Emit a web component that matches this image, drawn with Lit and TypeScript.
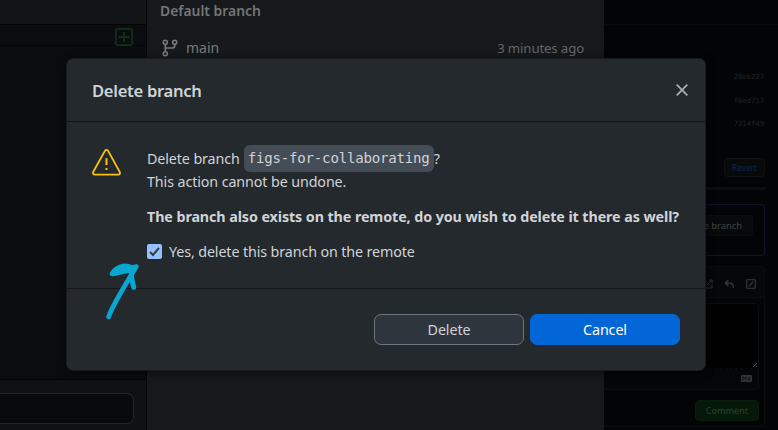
import { LitElement, html, css } from "lit";
import { customElement } from "lit/decorators.js";

const COMMITS = ["28eb227", "f6ed717", "7314f49"];

@customElement("branch-sidebar")
class BranchSidebar extends LitElement {
  static styles = css`
    :host { display: flex; flex-direction: column; box-sizing: border-box; width: 147px; height: 430px; background: #0b0c0f; border-right: 1px solid #040506; }
    .top { height: 24px; background: #111518; border-bottom: 1px solid #030405; }
    .tools { display: flex; justify-content: flex-end; align-items: center; padding: 0 13px 0 0; height: 20px; border-bottom: 1px solid #040506; }
    svg { display: block; margin-top: 3px; overflow: visible; }
    .list { flex: 1; }
    .foot { height: 51px; box-sizing: border-box; background: #0f1113; border-top: 1px solid #030405; padding: 13px 12px 0 0; }
    .input { height: 29px; border: 1px solid #242628; border-left: 0; border-radius: 0 7px 7px 0; background: #090a0c; }
  `;
  render() {
    return html`
      <div class="top"></div>
      <div class="tools">
        <svg width="18" height="18" viewBox="0 0 18 18" fill="none" stroke="#0d3418" stroke-width="1.6">
          <rect x="0.9" y="0.9" width="16.2" height="16.2" rx="1.3" />
          <path d="M9 4v10M4 9h10" stroke-width="1.8" />
        </svg>
      </div>
      <div class="list"></div>
      <div class="foot"><div class="input"></div></div>
    `;
  }
}

@customElement("branch-list")
class BranchList extends LitElement {
  static styles = css`
    :host { display: block; box-sizing: border-box; width: 457px; height: 430px; background: #16191c; padding: 0 20px 0 13px; color: #77797b; font: 14px/20px "Noto Sans", sans-serif; }
    .title { font-weight: 600; font-size: 13.9px; height: 20px; line-height: 21px; color: #747678; }
    .row { display: flex; align-items: center; margin-top: 18px; height: 20px; }
    .name { margin-left: 8px; flex: 1; font-size: 14px; }
    .time { font-size: 13.2px; letter-spacing: -0.12px; color: #626567; }
    svg { display: block; margin-left: 2px; }
  `;
  render() {
    return html`
      <div class="title">Default branch</div>
      <div class="row">
        <svg width="16" height="18" viewBox="0 0 16 18" fill="none" stroke="#77797b" stroke-width="1.6">
          <circle cx="3.3" cy="3.2" r="2" /><circle cx="3.3" cy="14.8" r="2" /><circle cx="12.7" cy="3.2" r="2" />
          <path d="M3.3 5.2v7.6M12.7 5.2v1.6a2.2 2.2 0 0 1-2.2 2.2h-7.2" />
        </svg>
        <span class="name">main</span>
        <span class="time">3 minutes ago</span>
      </div>
    `;
  }
}

@customElement("conversation-pane")
class ConversationPane extends LitElement {
  static styles = css`
    :host { display: flex; flex-direction: column; box-sizing: border-box; width: 174px; height: 430px; background: #030406; padding-right: 13px; overflow: hidden; font: 9px/12px "Noto Sans", sans-serif; color: #2c2e30; }
    .bar { height: 24px; margin-right: -13px; border-bottom: 1px solid #090a0b; }
    .commits { margin-top: 40px; text-align: right; font: 7.2px/23.6px "DejaVu Sans Mono", monospace; color: #232527; height: 70px; padding-right: 1px; }
    .commit { height: 23.6px; }
    .revert { align-self: flex-end; margin-top: 23px; box-sizing: border-box; width: 41px; height: 19px; border: 1px solid #101214; border-radius: 4px; background: #08090b; color: #0d2954; text-align: center; line-height: 17px; font-size: 8.3px; }
    .rule { height: 3px; margin-top: 10px; background: #0c0d0f; }
    .merged { box-sizing: border-box; height: 52px; margin-top: 14px; border: 1px solid #170f2d; border-left: 0; border-radius: 0 4px 4px 0; padding: 10px 11px 0 0; display: flex; justify-content: flex-end; align-items: flex-start; }
    .remove { height: 21px; box-sizing: border-box; padding: 0 10px; border-radius: 3px; background: #08090b; border: 1px solid #0c0d0f; line-height: 19px; font-size: 9.2px; font-weight: 500; color: #3c3e40; white-space: nowrap; }
    .box { box-sizing: border-box; height: 161px; margin-top: 10px; border: 1px solid #0c0d0f; border-left: 0; border-radius: 0 4px 4px 0; display: flex; flex-direction: column; }
    .icons { height: 30px; background: #06070a; border-bottom: 1px solid #0c0d0f; display: flex; justify-content: flex-end; align-items: center; padding-right: 8px; gap: 11px; }
    .icons svg { margin-top: 4px; }
    .editor { box-sizing: border-box; margin: 5px 5px 0 0; height: 87px; border: 1px solid #0c0d0f; border-left: 0; border-radius: 0 4px 4px 0; background: #050609; }
    .area { height: 65px; background: #000; display: flex; justify-content: flex-end; align-items: flex-end; border-radius: 0 3px 0 0; border-bottom: 1px dashed #0a0b0c; box-sizing: border-box; }
    .md { display: flex; justify-content: flex-end; padding: 6px 6px 0 0; }
    .send { align-self: flex-end; box-sizing: border-box; margin: 10px 5px 0 0; width: 64px; height: 21px; border-radius: 4px; background: #06180a; border: 1px solid #081d0d; color: #254129; text-align: center; line-height: 20px; font-size: 9px; font-weight: 500; }
    svg { display: block; }
  `;
  render() {
    return html`
      <div class="bar"></div>
      <div class="commits">${COMMITS.map((c) => html`<div class="commit">${c}</div>`)}</div>
      <div class="revert">Revert</div>
      <div class="rule"></div>
      <div class="merged"><div class="remove">Delete branch</div></div>
      <div class="box">
        <div class="icons">
          <svg width="9" height="10" viewBox="0 0 9 10" fill="none" stroke="#303234"><path d="M1 9h7V5M3 6L8 1M5 1h3.2v3M1 1h1" /></svg>
          <svg width="11" height="10" viewBox="0 0 11 10" fill="none" stroke="#3a3c3e" stroke-width="1.2"><path d="M4.4 1L1.2 4.1l3.2 3.1M1.2 4.1h4.6c2.6 0 3.7 1.6 3.7 4.6" /></svg>
          <svg width="10" height="10" viewBox="0 0 10 10" fill="none" stroke="#3a3c3e" stroke-width="1.1"><rect x=".7" y=".7" width="8.6" height="8.6" rx=".6" /><path d="M3 7L7 3" /></svg>
        </div>
        <div class="editor">
          <div class="area"><svg width="6" height="6" viewBox="0 0 6 6" stroke="#555"><path d="M1 5L5 1M4 5.2L5.2 4" /></svg></div>
          <div class="md"><svg width="11" height="7" viewBox="0 0 11 7"><rect width="11" height="7" rx="1" fill="#303234" /><path d="M2 5.3V1.8l1.5 1.7L5 1.8v3.5M8 1.6v3.3M6.7 3.8L8 5.1l1.3-1.3" fill="none" stroke="#08090b" stroke-width=".8" /></svg></div>
        </div>
        <div class="send">Comment</div>
      </div>
    `;
  }
}

@customElement("delete-dialog")
class DeleteDialog extends LitElement {
  static styles = css`
    :host { display: flex; flex-direction: column; box-sizing: border-box; width: 640px; height: 313px; border: 1px solid #191c1f; border-radius: 7px; background: #24292d; box-shadow: 0 2px 8px rgba(0, 0, 0, 0.55); color: #d0d3d7; font: 14.3px/23px "Noto Sans", sans-serif; letter-spacing: -0.11px; }
    .head { height: 62px; box-sizing: border-box; display: flex; align-items: center; justify-content: space-between; padding: 0 17px 0 25px; }
    .title { font-size: 16.6px; font-weight: 600; letter-spacing: -0.3px; }
    .body { box-sizing: border-box; height: 168px; border-top: 1px solid #141619; border-bottom: 1px solid #141619; display: flex; padding: 25px 0 0 25px; }
    .warn { margin: 2px 26px 0 0; }
    .copy { flex: 1; white-space: nowrap; }
    .line { height: 23px; display: flex; align-items: center; }
    .code { box-sizing: border-box; width: 190px; font: 14.1px/26px "DejaVu Sans Mono", monospace; letter-spacing: -0.22px; background: #444c56; border-radius: 6px; padding: 0 4px; height: 27px; margin-left: 4px; }
    .strong { margin-top: 12px; font-weight: 700; letter-spacing: -0.09px; }
    .check { margin-top: 12px; gap: 7px; letter-spacing: -0.12px; }
    .foot { display: flex; justify-content: flex-end; gap: 6px; padding: 25px 25px 0 0; }
    .btn { box-sizing: border-box; width: 150px; height: 31px; border: 1px solid #6e7681; border-radius: 7px; background: #2f353d; text-align: center; line-height: 29px; }
    .primary { background: #0366d6; border-color: #0366d6; color: #fff; }
    svg { display: block; }
  `;
  render() {
    return html`
      <div class="head">
        <span class="title">Delete branch</span>
        <svg width="12" height="12" viewBox="0 0 12 12" stroke="#a9adb1" stroke-width="1.8"><path d="M.7.7l10.6 10.6M11.3.7L.7 11.3" /></svg>
      </div>
      <div class="body">
        <svg class="warn" width="29" height="27" viewBox="0 0 29 27" fill="none" stroke="#fbc211" stroke-width="1.8" stroke-linejoin="round">
          <path d="M12.9 1.9L1.3 22.8c-.8 1.5 0 2.8 1.6 2.8h23.2c1.6 0 2.4-1.3 1.6-2.8L16.1 1.9c-.8-1.3-2.4-1.3-3.2 0z" />
          <path d="M14.5 9.3v6.6M14.5 18.9v2.2" stroke-width="2" />
        </svg>
        <div class="copy">
          <div class="line"><span>Delete branch</span><span class="code">figs-for-collaborating</span><span>?</span></div>
          <div class="line">This action cannot be undone.</div>
          <div class="line strong">The branch also exists on the remote, do you wish to delete it there as well?</div>
          <div class="line check">
            <svg width="15" height="15" viewBox="0 0 15 15"><rect width="15" height="15" rx="2" fill="#94c1fd" /><path d="M3 8l3 3 6-7.2" fill="none" stroke="#363b42" stroke-width="2" /></svg>
            <span>Yes, delete this branch on the remote</span>
          </div>
        </div>
      </div>
      <div class="foot"><div class="btn">Delete</div><div class="btn primary">Cancel</div></div>
    `;
  }
}

@customElement("app-root")
class AppRoot extends LitElement {
  static styles = css`
    :host { display: flex; position: relative; width: 778px; height: 430px; overflow: hidden; background: #030406; }
    delete-dialog { position: absolute; left: 66px; top: 58px; }
    .arrow { position: absolute; left: 100px; top: 258px; }
  `;
  render() {
    return html`
      <branch-sidebar></branch-sidebar>
      <branch-list></branch-list>
      <conversation-pane></conversation-pane>
      <delete-dialog></delete-dialog>
      <svg class="arrow" width="44" height="66" viewBox="0 0 44 66" fill="none" stroke="#06a7d0" stroke-linecap="round" stroke-linejoin="round">
        <path d="M8.7 58.7C13 46.5 21 34 35.5 10" stroke-width="4.8" />
        <path d="M31.5 13c-.6 6 .7 10 2.2 16.3" stroke-width="5" />
        <path d="M36.5 8.5L31.5 9.3C24 5.5 15 9.5 11.8 15.9C17 16.5 24 12.5 32 12.5Z" fill="#06a7d0" stroke-width="4.4" />
      </svg>
    `;
  }
}
